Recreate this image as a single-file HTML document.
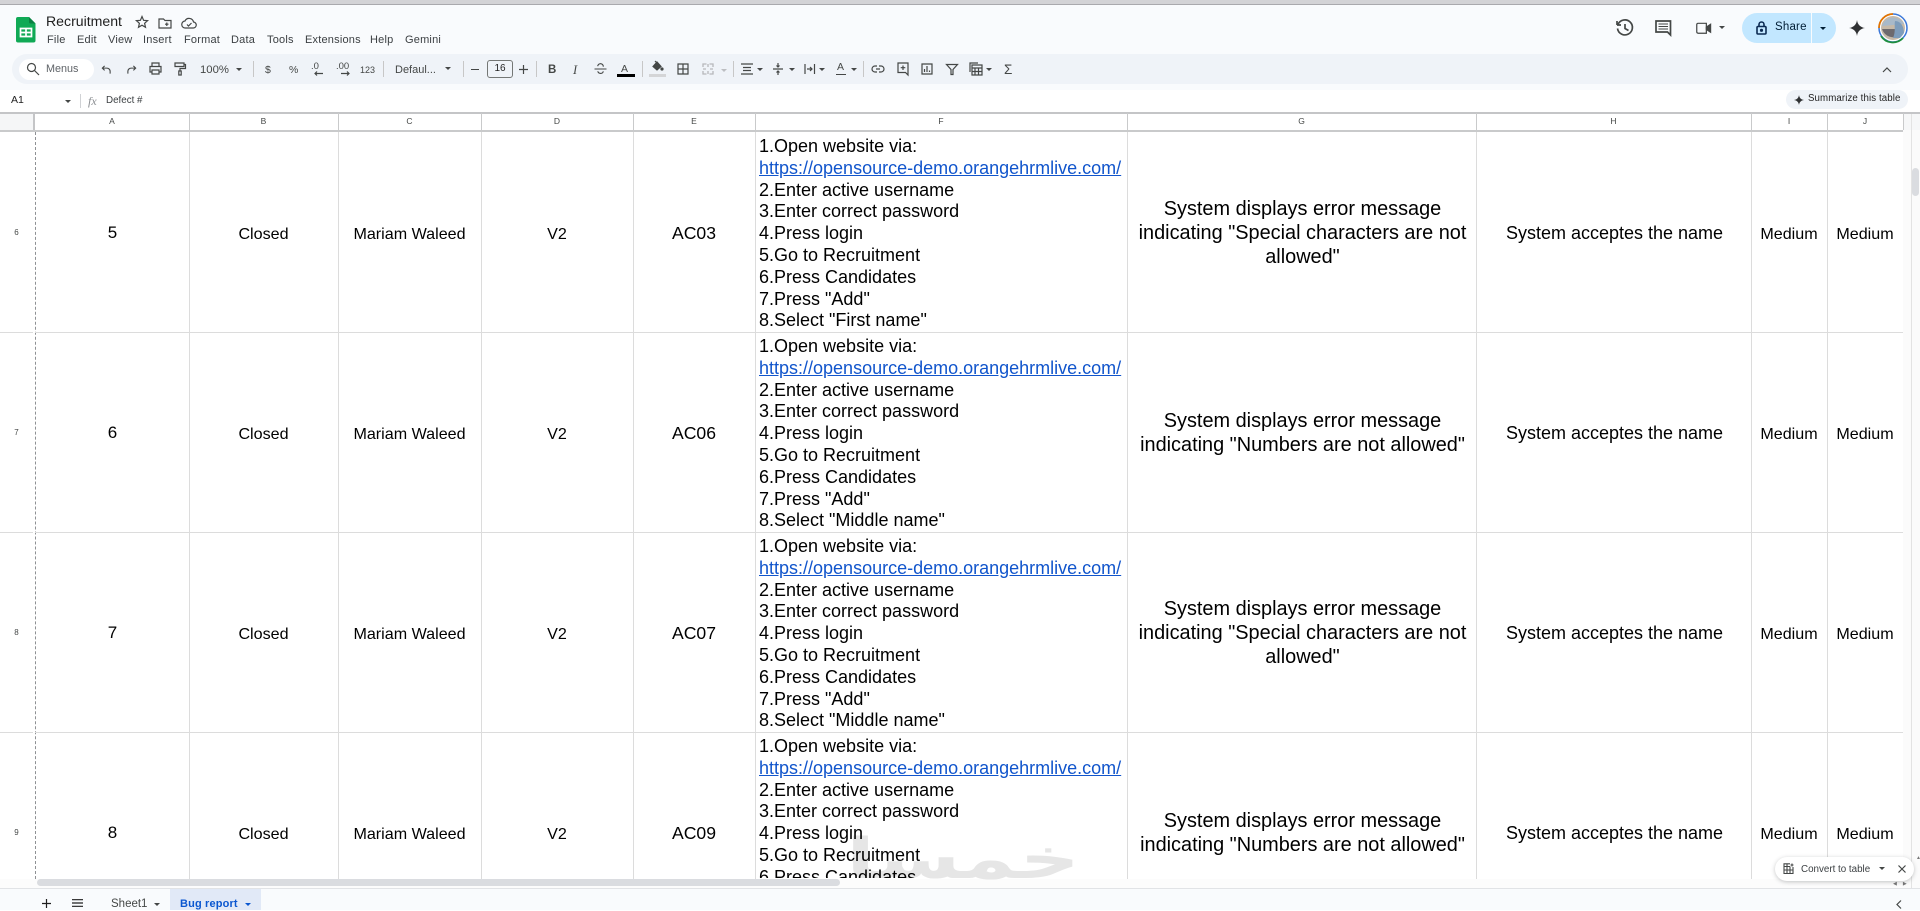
<!DOCTYPE html>
<html><head><meta charset="utf-8"><title>Recruitment</title>
<style>
html,body{margin:0;padding:0;width:1920px;height:910px;overflow:hidden;background:#fff;font-family:"Liberation Sans",Arial,sans-serif}
.a{position:absolute}
.t{position:absolute;white-space:nowrap}
.menu{top:33px;font-size:11px;color:#3c4043;letter-spacing:.2px;line-height:14px}
.sep{position:absolute;width:1px;height:16px;top:61px;background:#c7c7c7}
.car{position:absolute;width:0;height:0;border-left:3.5px solid transparent;border-right:3.5px solid transparent;border-top:3.5px solid #444746}
.tb{top:63px;font-size:10.5px;color:#444746;line-height:14px}
.vl{position:absolute;top:132px;height:747px;width:1px;background:#dcdcdc}
.hl{position:absolute;left:35px;width:1868px;height:1px;background:#dcdcdc}
.hv{position:absolute;top:113px;height:17px;width:1px;background:#c9cacb}
.ch{position:absolute;top:115px;font-size:8.5px;color:#444746;text-align:center;line-height:13px}
.rn{position:absolute;left:0;width:33px;text-align:center;font-size:8px;color:#444746}
.c{position:absolute;display:flex;align-items:center;justify-content:center;text-align:center;color:#000;font-size:16.1px;height:200px}
.c.b{padding-top:2px;box-sizing:border-box}
.g{font-size:19.9px;line-height:24px}
.n{font-size:17px;padding-left:1px;box-sizing:border-box}
.ac{font-size:17.6px}
.h{font-size:18px;padding-left:2px;box-sizing:border-box}
.f{position:absolute;left:759px;width:366px;font-size:18px;line-height:21.8px;color:#000;white-space:nowrap}
.f a{color:#1155cc;text-decoration:underline}
.l{height:100px}
svg{position:absolute;overflow:visible}
.i{fill:none;stroke:#444746;stroke-width:1.2}
</style></head><body>
<div class="a" style="left:0;top:0;width:1920px;height:110px;background:#f9fbfd"></div>
<div class="a" style="left:0;top:0;width:1920px;height:4px;background:#d3d3d6"></div>
<div class="a" style="left:0;top:4px;width:1920px;height:1px;background:#a9a9ad"></div>

<!-- logo -->
<svg style="left:16px;top:17px" width="20" height="26" viewBox="0 0 20 26"><path d="M2 0H13L19.500 6.500V23.500A2 2 0 0 1 17.500 25.500H2A2 2 0 0 1 0 23.500V2A2 2 0 0 1 2 0Z" fill="#10a955"/><path d="M13 0L19.500 6.500H14.500A1.500 1.500 0 0 1 13 5Z" fill="#0b8043"/><path d="M4.500 11.500H15.500V19.500H4.500ZM4.500 15.500H15.500M10 11.500V19.500" fill="none" stroke="#fff" stroke-width="1.700"/></svg>
<div class="t" style="left:46px;top:12px;font-size:14.1px;line-height:18px;color:#1f1f1f">Recruitment</div>
<svg class="i" style="left:134px;top:14px" width="16" height="16" viewBox="0 0 16 16"><path d="M8 2.500L9.600 6.300L13.600 6.600L10.600 9.300L11.500 13.300L8 11.200L4.500 13.300L5.400 9.300L2.400 6.600L6.400 6.300Z"/></svg>
<svg class="i" style="left:157px;top:15px" width="16" height="16" viewBox="0 0 16 16"><path d="M2 4H6.500L8 5.500H14V13H2ZM8 9.200H11.500M9.800 7.500V11"/></svg>
<svg class="i" style="left:181px;top:15px" width="16" height="16" viewBox="0 0 16 16"><path d="M4.500 13H12A3 3 0 0 0 12.500 7A4.500 4.500 0 0 0 4 6A3.500 3.500 0 0 0 4.500 13ZM6 9.500L7.500 11L10.500 8"/></svg>
<div class="t menu" style="left:47px">File</div><div class="t menu" style="left:77px">Edit</div><div class="t menu" style="left:108px">View</div><div class="t menu" style="left:143px">Insert</div><div class="t menu" style="left:184px">Format</div><div class="t menu" style="left:231px">Data</div><div class="t menu" style="left:267px">Tools</div><div class="t menu" style="left:305px">Extensions</div><div class="t menu" style="left:370px">Help</div><div class="t menu" style="left:405px">Gemini</div>

<!-- toolbar -->
<div class="a" style="left:12px;top:54px;width:1896px;height:30px;border-radius:15px;background:#eff3f8"></div>
<div class="a" style="left:19px;top:59px;width:75px;height:21px;border-radius:11px;background:#fff"></div>
<svg class="i" style="left:26px;top:62px" width="14" height="14" viewBox="0 0 14 14"><circle cx="5.500" cy="5.500" r="4"/><path d="M8.500 8.500L13 13"/></svg>
<div class="t tb" style="left:46px;top:62px;color:#5f6368;font-size:10.800px">Menus</div>
<svg class="i" style="left:100px;top:64px" width="12" height="11" viewBox="0 0 12 12"><path d="M10.500 10.500V8A3.500 3.500 0 0 0 7 4.500H2M4.500 2L2 4.500L4.500 7"/></svg>
<svg class="i" style="left:126px;top:64px" width="12" height="11" viewBox="0 0 12 12"><path d="M1.500 10.500V8A3.500 3.500 0 0 1 5 4.500H10M7.500 2L10 4.500L7.500 7"/></svg>
<svg class="i" style="left:149px;top:62px" width="13" height="13" viewBox="0 0 13 13"><path d="M3 4V1H10V4M3 10H1V4.500H12V10H10M3 8H10V12H3Z"/></svg>
<svg class="i" style="left:174px;top:62px" width="12" height="14" viewBox="0 0 12 14"><path d="M1 1H10V4.500H1ZM10 2.500H11.500V6.500H6V9M4.800 9H7.200V13H4.800Z"/></svg>
<div class="t tb" style="left:200px;font-size:11.300px">100%</div><div class="car" style="left:236px;top:68px"></div>
<div class="sep" style="left:253px"></div>
<div class="t tb" style="left:265px;font-size:10.500px">$</div><div class="t tb" style="left:289px">%</div>
<div class="t tb" style="left:311px;font-size:9.500px;top:60px">.0</div><svg class="i" style="left:314px;top:71px" width="10" height="5" viewBox="0 0 10 5"><path d="M9 2.500H1M3 .5L1 2.500L3 4.500"/></svg>
<div class="t tb" style="left:336px;font-size:9.500px;top:60px">.00</div><svg class="i" style="left:340px;top:71px" width="10" height="5" viewBox="0 0 10 5"><path d="M1 2.500H9M7 .5L9 2.500L7 4.500"/></svg>
<div class="t tb" style="left:360px;font-size:9px">123</div>
<div class="sep" style="left:383px"></div>
<div class="t tb" style="left:395px;font-size:11px">Defaul...</div><div class="car" style="left:445px;top:67px"></div>
<div class="sep" style="left:463px"></div>
<div class="a" style="left:471px;top:69px;width:8px;height:1.300px;background:#444746"></div>
<div class="a" style="left:487px;top:60px;width:24px;height:16px;border:1px solid #747775;border-radius:3px;font-size:10px;color:#1f1f1f;text-align:center;line-height:16px">16</div>
<svg class="i" style="left:519px;top:65px" width="9" height="9" viewBox="0 0 9 9"><path d="M4.500 0V9M0 4.500H9"/></svg>
<div class="sep" style="left:536px"></div>
<div class="t tb" style="left:548px;font-weight:bold;font-size:11.500px">B</div>
<div class="t tb" style="left:573px;font-style:italic;font-size:12.500px;font-family:'Liberation Serif',serif">I</div>
<svg class="i" style="left:594px;top:63px" width="13" height="12" viewBox="0 0 13 13"><path d="M0 6.500H13M9.500 4A3 3 0 0 0 3.500 3.500M3.500 9C4.500 12 9 12 9.500 9"/></svg>
<div class="t tb" style="left:621px;top:62px;font-size:10.500px">A</div><div class="a" style="left:617px;top:74px;width:18px;height:3px;background:#000"></div>
<div class="sep" style="left:642px"></div>
<svg class="i" style="left:651px;top:60px" width="12" height="12" viewBox="0 0 12 12"><path d="M2 6.500L6 2L10 6.500L6 10Z" fill="#444746"/><path d="M4 1L6 3" /><circle cx="11" cy="9" r="1" fill="#444746"/></svg>
<div class="a" style="left:649px;top:74px;width:17px;height:3px;background:#d4d5d7"></div>
<svg class="i" style="left:677px;top:63px" width="12" height="12" viewBox="0 0 12 12"><path d="M1 1H11V11H1ZM1 6H11M6 1V11"/></svg>
<svg style="left:702px;top:63px;fill:none;stroke:#b6b8bb;stroke-width:1.300" width="12" height="12" viewBox="0 0 12 12"><path d="M1 4V1H4.500M11 4V1H7.500M1 8V11H4.500M11 8V11H7.500M6 1V4M6 8V11M1 6H4M8 6H11"/></svg>
<div class="car" style="left:721px;top:69px;border-top-color:#bcbec1"></div>
<div class="sep" style="left:733px"></div>
<svg class="i" style="left:741px;top:63px" width="12" height="12" viewBox="0 0 12 12"><path d="M0 1H12M2 4.500H10M2 7.500H10M0 11H12"/></svg><div class="car" style="left:757px;top:68px"></div>
<svg class="i" style="left:773px;top:63px" width="10" height="12" viewBox="0 0 10 12"><path d="M0 6H10M5 0V4M3.500 2.500L5 4L6.500 2.500M5 12V8M3.500 9.500L5 8L6.500 9.500"/></svg><div class="car" style="left:789px;top:68px"></div>
<svg class="i" style="left:804px;top:63px" width="12" height="12" viewBox="0 0 12 12"><path d="M1 1V11M10.500 1V11M3 6H8M6 4L8 6L6 8"/></svg><div class="car" style="left:819px;top:68px"></div>
<div class="t tb" style="left:837px;top:60px;font-size:10.500px">A</div><div class="a" style="left:836px;top:74px;width:10px;height:1.300px;background:#444746"></div><div class="car" style="left:851px;top:68px"></div>
<div class="sep" style="left:863px"></div>
<svg class="i" style="left:872px;top:64px" width="12" height="10" viewBox="0 0 12 10"><path d="M5 2H3A3 3 0 0 0 3 8H5M7 2H9A3 3 0 0 1 9 8H7M4 5H8"/></svg>
<svg class="i" style="left:897px;top:62px" width="12" height="14" viewBox="0 0 12 14"><path d="M1 1H11V13L8.500 10.500H1ZM6 3.500V8M3.700 5.700H8.300"/></svg>
<svg class="i" style="left:921px;top:63px" width="12" height="12" viewBox="0 0 12 12"><path d="M1 1H11V11H1ZM3.500 9V6M6 9V3M8.500 9V7.500"/></svg>
<svg class="i" style="left:946px;top:64px" width="12" height="11" viewBox="0 0 12 11"><path d="M.5 .5H11.500L7 5.500V10.500H5V5.500Z"/></svg>
<svg class="i" style="left:969px;top:62px" width="14" height="14" viewBox="0 0 14 14"><path d="M1 10V1H9M3 13V3H13V13ZM3 6H13M6 6V13M9.500 6V13M3 9.500H13"/></svg><div class="car" style="left:986px;top:68px"></div>
<div class="t tb" style="left:1004px;top:63px;font-size:13.500px">&#931;</div>
<svg class="i" style="left:1882px;top:67px" width="10" height="6" viewBox="0 0 10 6"><path d="M1 5L5 1L9 5"/></svg>

<!-- right header -->
<svg style="left:1616px;top:19px;fill:none;stroke:#444746;stroke-width:1.700" width="18" height="18" viewBox="0 0 18 18"><path d="M1 6V2M1 6H5M2 5.500A7.500 7.500 0 1 1 1.500 9.500M9 5V9.500L12.500 11.500"/></svg>
<svg style="left:1655px;top:20px;fill:none;stroke:#444746;stroke-width:1.700" width="17" height="16" viewBox="0 0 17 16"><path d="M1 1H15.500V15L12.500 12H1Z"/><path d="M3.500 4H13M3.500 6.500H13M3.500 9H13" stroke-width="1.100"/></svg>
<svg style="left:1696px;top:22px;fill:none;stroke:#444746;stroke-width:1.300" width="16" height="13" viewBox="0 0 17 13"><path d="M2 1H11V11.500H2A1.500 1.500 0 0 1 .8 10V2.500A1.500 1.500 0 0 1 2 1Z"/><path d="M11 5L15.500 2V10.500L11 7.500Z" fill="#444746"/></svg>
<div class="car" style="left:1719px;top:26px;border-left-width:3px;border-right-width:3px;border-top-width:3px"></div>
<div class="a" style="left:1742px;top:13px;width:94px;height:30px;border-radius:15px;background:#c2e7ff"></div>
<div class="a" style="left:1811px;top:13px;width:1px;height:30px;background:#f9fbfd"></div>
<svg style="left:1756px;top:21px;fill:none;stroke:#0b2a52;stroke-width:1.600" width="11" height="14" viewBox="0 0 11 14"><rect x="1" y="5.500" width="9" height="7.500" rx="1"/><path d="M3 5.500V3.500A2.500 2.500 0 0 1 8 3.500V5.500"/><circle cx="5.500" cy="9.300" r=".8" fill="#0b2a52"/></svg>
<div class="t" style="left:1775px;top:20px;font-size:11.500px;line-height:15px;color:#001d35;letter-spacing:.2px">Share</div>
<div class="car" style="left:1820px;top:27px;border-top-color:#001d35"></div>
<svg style="left:1849px;top:20px" width="16" height="16" viewBox="0 0 16 16"><path d="M8 0C8.500 4.500 11.500 7.500 16 8C11.500 8.500 8.500 11.500 8 16C7.500 11.500 4.500 8.500 0 8C4.500 7.500 7.500 4.500 8 0Z" fill="#2f3133"/></svg>
<svg style="left:1878px;top:13px" width="30" height="30" viewBox="0 0 30 30"><circle cx="15" cy="15" r="14" fill="#fff" stroke="#3c78d8" stroke-width="1.500"/><path d="M15 1A14 14 0 0 0 1 15" fill="none" stroke="#e37400" stroke-width="1.800"/><path d="M3 23A14 14 0 0 0 25 25" fill="none" stroke="#1e8e3e" stroke-width="1.800"/><circle cx="15" cy="15" r="12" fill="#c6b9a8"/><path d="M4 13A12 12 0 0 1 26 11Z" fill="#a8b9c9"/><path d="M4 16H18V24A12 12 0 0 1 4 16Z" fill="#6d6a6e"/><path d="M17 8C23 8 26 14 26 20L22 25H15C18 18 16 13 17 8Z" fill="#7d9cbb"/></svg>

<!-- formula bar -->
<div class="a" style="left:0;top:90px;width:1920px;height:22px;background:#fff"></div>
<div class="t" style="left:11px;top:94px;font-size:10.500px;line-height:13px;color:#1f1f1f">A1</div>
<div class="car" style="left:65px;top:100px"></div>
<div class="a" style="left:80px;top:94px;width:1px;height:14px;background:#d0d2d5"></div>
<div class="t" style="left:88px;top:94px;font-size:12px;font-family:'Liberation Serif',serif;font-style:italic;color:#8a8d91;line-height:15px">fx</div>
<div class="t" style="left:106px;top:94px;font-size:9.800px;line-height:13px;color:#3c4043">Defect #</div>
<div class="a" style="left:1786px;top:90px;width:122px;height:19px;border-radius:10px;background:#eff3f8"></div>
<svg style="left:1794px;top:95px" width="10" height="10" viewBox="0 0 16 16"><path d="M8 0C8.500 4.500 11.500 7.500 16 8C11.500 8.500 8.500 11.500 8 16C7.500 11.500 4.500 8.500 0 8C4.500 7.500 7.500 4.500 8 0Z" fill="#2f3133"/></svg>
<div class="t" style="left:1808px;top:92px;font-size:9.700px;line-height:14px;color:#1f1f1f;letter-spacing:.1px">Summarize this table</div>

<!-- grid headers -->
<div class="a" style="left:0;top:112px;width:1920px;height:2px;background:#c4c5c7"></div>
<div class="a" style="left:0;top:114px;width:33px;height:16px;background:#f5f6f7"></div>
<div class="a" style="left:33px;top:112px;width:2px;height:20px;background:#c4c5c7"></div>
<div class="a" style="left:1903px;top:114px;width:17px;height:16px;background:#f6f7f8"></div>
<div class="a" style="left:0;top:130px;width:1903px;height:1.500px;background:#c9cacb"></div>
<div class="hv" style="left:189px"></div><div class="hv" style="left:338px"></div><div class="hv" style="left:481px"></div><div class="hv" style="left:633px"></div><div class="hv" style="left:755px"></div><div class="hv" style="left:1127px"></div><div class="hv" style="left:1476px"></div><div class="hv" style="left:1751px"></div><div class="hv" style="left:1827px"></div><div class="hv" style="left:1903px"></div>
<div class="ch" style="left:35px;width:154px">A</div><div class="ch" style="left:189px;width:149px">B</div><div class="ch" style="left:338px;width:143px">C</div><div class="ch" style="left:481px;width:152px">D</div><div class="ch" style="left:633px;width:122px">E</div><div class="ch" style="left:755px;width:372px">F</div><div class="ch" style="left:1127px;width:349px">G</div><div class="ch" style="left:1476px;width:275px">H</div><div class="ch" style="left:1751px;width:76px">I</div><div class="ch" style="left:1827px;width:76px">J</div>

<!-- grid lines -->
<div class="a" style="left:35px;top:132px;width:0;height:747px;border-left:1px dashed #8f9194"></div>
<div class="vl" style="left:189px"></div><div class="vl" style="left:338px"></div><div class="vl" style="left:481px"></div><div class="vl" style="left:633px"></div><div class="vl" style="left:755px"></div><div class="vl" style="left:1127px"></div><div class="vl" style="left:1476px"></div><div class="vl" style="left:1751px"></div><div class="vl" style="left:1827px"></div><div class="vl" style="left:1903px"></div>
<div class="hl" style="top:332px"></div><div class="hl" style="top:532px"></div><div class="hl" style="top:732px"></div>
<div class="a" style="left:0;top:332px;width:33px;height:1px;background:#dcdcdc"></div><div class="a" style="left:0;top:532px;width:33px;height:1px;background:#dcdcdc"></div><div class="a" style="left:0;top:732px;width:33px;height:1px;background:#dcdcdc"></div>

<!-- rows container clipped -->
<div class="a" style="left:0;top:132px;width:1903px;height:746px;overflow:hidden">
<div class="a" style="left:0;top:-132px;width:1903px;height:878px">
<div class="rn" style="top:228px">6</div><div class="rn" style="top:428px">7</div><div class="rn" style="top:628px">8</div><div class="rn" style="top:828px">9</div>

<!-- row 5 -->
<div class="c n" style="left:35px;width:154px;top:133px">5</div><div class="c b" style="left:189px;width:149px;top:133px">Closed</div><div class="c b" style="left:338px;width:143px;top:133px">Mariam Waleed</div><div class="c b" style="left:481px;width:152px;top:133px">V2</div><div class="c ac" style="left:633px;width:122px;top:133px">AC03</div>
<div class="f" style="top:136px">1.Open website via:<br><a>https://opensource-demo.orangehrmlive.com/</a><br>2.Enter active username<br>3.Enter correct password<br>4.Press login<br>5.Go to Recruitment<br>6.Press Candidates<br>7.Press "Add"<br>8.Select "First name"</div>
<div class="c g" style="left:1130px;width:345px;top:133px">System displays error message<br>indicating "Special characters are not<br>allowed"</div>
<div class="c h" style="left:1476px;width:275px;top:133px">System acceptes the name</div><div class="c b" style="left:1751px;width:76px;top:133px">Medium</div><div class="c b" style="left:1827px;width:76px;top:133px">Medium</div>

<!-- row 6 -->
<div class="c n" style="left:35px;width:154px;top:333px">6</div><div class="c b" style="left:189px;width:149px;top:333px">Closed</div><div class="c b" style="left:338px;width:143px;top:333px">Mariam Waleed</div><div class="c b" style="left:481px;width:152px;top:333px">V2</div><div class="c ac" style="left:633px;width:122px;top:333px">AC06</div>
<div class="f" style="top:336px">1.Open website via:<br><a>https://opensource-demo.orangehrmlive.com/</a><br>2.Enter active username<br>3.Enter correct password<br>4.Press login<br>5.Go to Recruitment<br>6.Press Candidates<br>7.Press "Add"<br>8.Select "Middle name"</div>
<div class="c g" style="left:1130px;width:345px;top:333px">System displays error message<br>indicating "Numbers are not allowed"</div>
<div class="c h" style="left:1476px;width:275px;top:333px">System acceptes the name</div><div class="c b" style="left:1751px;width:76px;top:333px">Medium</div><div class="c b" style="left:1827px;width:76px;top:333px">Medium</div>

<!-- row 7 -->
<div class="c n" style="left:35px;width:154px;top:533px">7</div><div class="c b" style="left:189px;width:149px;top:533px">Closed</div><div class="c b" style="left:338px;width:143px;top:533px">Mariam Waleed</div><div class="c b" style="left:481px;width:152px;top:533px">V2</div><div class="c ac" style="left:633px;width:122px;top:533px">AC07</div>
<div class="f" style="top:536px">1.Open website via:<br><a>https://opensource-demo.orangehrmlive.com/</a><br>2.Enter active username<br>3.Enter correct password<br>4.Press login<br>5.Go to Recruitment<br>6.Press Candidates<br>7.Press "Add"<br>8.Select "Middle name"</div>
<div class="c g" style="left:1130px;width:345px;top:533px">System displays error message<br>indicating "Special characters are not<br>allowed"</div>
<div class="c h" style="left:1476px;width:275px;top:533px">System acceptes the name</div><div class="c b" style="left:1751px;width:76px;top:533px">Medium</div><div class="c b" style="left:1827px;width:76px;top:533px">Medium</div>

<!-- row 8 -->
<div class="c n l" style="left:35px;width:154px;top:783px">8</div><div class="c b l" style="left:189px;width:149px;top:783px">Closed</div><div class="c b l" style="left:338px;width:143px;top:783px">Mariam Waleed</div><div class="c b l" style="left:481px;width:152px;top:783px">V2</div><div class="c ac l" style="left:633px;width:122px;top:783px">AC09</div>
<div class="f" style="top:736px">1.Open website via:<br><a>https://opensource-demo.orangehrmlive.com/</a><br>2.Enter active username<br>3.Enter correct password<br>4.Press login<br>5.Go to Recruitment<br>6.Press Candidates</div>
<div class="c g l" style="left:1130px;width:345px;top:783px">System displays error message<br>indicating "Numbers are not allowed"</div>
<div class="c h l" style="left:1476px;width:275px;top:783px">System acceptes the name</div><div class="c b l" style="left:1751px;width:76px;top:783px">Medium</div><div class="c b l" style="left:1827px;width:76px;top:783px">Medium</div>
</div></div>

<!-- scrollbars -->
<div class="a" style="left:1903px;top:130px;width:17px;height:758px;background:#fbfbfb"></div>
<div class="a" style="left:1911px;top:114px;width:1px;height:774px;background:#e3e3e3"></div>
<div class="a" style="left:1912px;top:168px;width:7px;height:28px;border-radius:4px;background:#dadce0"></div>
<div class="a" style="left:0;top:879px;width:1903px;height:9px;background:#fcfcfc"></div>
<div class="a" style="left:37px;top:879px;width:803px;height:7px;border-radius:4px;background:#dadce0"></div>
<div class="t" style="left:1916px;top:855px;font-size:5px;color:#777;line-height:6px">&#9650;</div>
<div class="t" style="left:1893px;top:881px;font-size:5px;color:#777;line-height:6px;letter-spacing:6px">&#9664;&#9654;</div>

<!-- watermark -->
<div class="a" style="left:840px;top:835px;width:250px;height:54px;overflow:hidden;mix-blend-mode:multiply"><div class="t" dir="rtl" style="left:0;width:160px;top:-17px;font-family:'DejaVu Sans',sans-serif;font-weight:bold;font-size:56px;line-height:84px;color:#e6e6e6;transform:scaleX(1.500);transform-origin:0 0;text-align:center">خمسات</div></div>

<!-- footer -->
<div class="a" style="left:0;top:888px;width:1920px;height:22px;background:#f9fbfd;border-top:1px solid #e1e3e6;box-sizing:border-box"></div>
<svg class="i" style="left:42px;top:899px;stroke:#1f1f1f" width="9" height="9" viewBox="0 0 9 9"><path d="M4.500 0V9M0 4.500H9"/></svg>
<svg class="i" style="left:72px;top:899px;stroke:#1f1f1f" width="11" height="8" viewBox="0 0 11 8"><path d="M0 .7H11M0 4H11M0 7.300H11"/></svg>
<div class="t" style="left:111px;top:897px;font-size:11.500px;line-height:14px;color:#444746">Sheet1</div><div class="car" style="left:154px;top:903px"></div>
<div class="a" style="left:170px;top:889px;width:91px;height:21px;background:#e1e9f7"></div>
<div class="t" style="left:180px;top:897px;font-size:11px;font-weight:bold;line-height:14px;color:#0b57d0;letter-spacing:.15px">Bug report</div><div class="car" style="left:245px;top:903px;border-top-color:#0b57d0"></div>
<svg class="i" style="left:1896px;top:900px" width="6" height="9" viewBox="0 0 6 9"><path d="M5 .5L1 4.500L5 8.500"/></svg>

<!-- convert -->
<div class="a" style="left:1775px;top:857px;width:139px;height:24px;border-radius:12px;background:#fff;box-shadow:0 1px 4px rgba(60,64,67,.3)"></div>
<svg class="i" style="left:1783px;top:863px;stroke-width:1.100" width="11" height="11" viewBox="0 0 11 11"><path d="M7 .8H1V10.500H10V4M1 3.500H7M4 .8V10.500M7 3.500V10.500M1 7H10M9 .5V3.500M7.500 2H10.500"/></svg>
<div class="t" style="left:1801px;top:863px;font-size:9.800px;line-height:14px;color:#3c4043">Convert to table</div>
<div class="car" style="left:1879px;top:867px;border-left-width:3px;border-right-width:3px;border-top-width:3px"></div>
<svg class="i" style="left:1898px;top:865px" width="8" height="8" viewBox="0 0 8 8"><path d="M.5 .5L7.500 7.500M7.500 .5L.5 7.500"/></svg>
</body></html>
